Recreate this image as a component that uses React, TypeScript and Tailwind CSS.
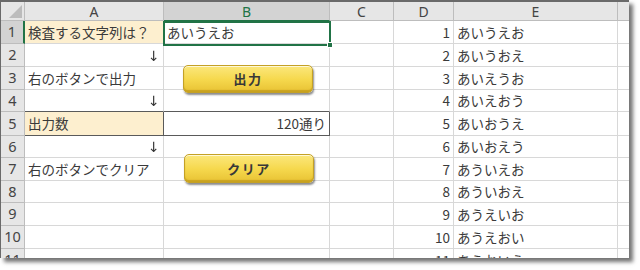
import React from "react";

const COLS = [
  { key: "A", w: 139 },
  { key: "B", w: 166 },
  { key: "C", w: 64 },
  { key: "D", w: 60 },
  { key: "E", w: 164 },
  { key: "F", w: 40 },
];

const HEIGHTS = [23, 23, 23, 22, 24, 22, 23, 22, 23, 23, 23];

const E_VALUES = [
  "あいうえお",
  "あいうおえ",
  "あいえうお",
  "あいえおう",
  "あいおうえ",
  "あいおえう",
  "あういえお",
  "あういおえ",
  "あうえいお",
  "あうえおい",
  "あうおいえ",
];

type Cell = { text?: string; align?: "left" | "right"; bg?: string; arrow?: boolean };

function rowCells(r: number): Record<string, Cell> {
  const cells: Record<string, Cell> = {
    D: { text: String(r), align: "right" },
    E: { text: E_VALUES[r - 1], align: "left" },
  };
  if (r === 1) {
    cells.A = { text: "検査する文字列は？", align: "left", bg: "bg-[#fdefcf]" };
    cells.B = { text: "あいうえお", align: "left" };
  }
  if (r === 2 || r === 4 || r === 6) cells.A = { text: "↓", align: "right", arrow: true };
  if (r === 3) cells.A = { text: "右のボタンで出力", align: "left" };
  if (r === 5) {
    cells.A = { text: "出力数", align: "left", bg: "bg-[#fdefcf]" };
    cells.B = { text: "120通り", align: "right" };
  }
  if (r === 7) cells.A = { text: "右のボタンでクリア", align: "left" };
  return cells;
}

const font = { fontFamily: '"Noto Sans CJK JP", "Noto Sans", sans-serif' };
const arrowFont = { fontFamily: '"DejaVu Sans", "Liberation Sans", sans-serif' };

function YellowButton({ label, className }: { label: string; className: string }) {
  return (
    <div
      className={
        "absolute flex items-center justify-center rounded-[5px] border border-[#c4a126] bg-gradient-to-b from-[#fbe77a] via-[#f6d94e] to-[#e8c232] shadow-[1px_2px_2px_rgba(0,0,0,0.45),inset_0_1px_0_rgba(255,255,255,0.7),inset_0_-2px_1px_rgba(170,130,10,0.5)] " +
        className
      }
    >
      <span className="text-[13px] font-bold tracking-[1.5px] text-[#383838]" style={font}>
        {label}
      </span>
    </div>
  );
}

export default function App() {
  return (
    <div className="w-[640px] h-[270px] bg-white overflow-hidden">
      <div className="relative w-[629px] h-[258px] border-t-2 border-l border-[#6a6a6a] bg-white overflow-hidden shadow-[4px_4px_4px_rgba(0,0,0,0.55)]">
        {/* header row */}
        <div className="flex h-[19px]">
          <div className="w-[24px] shrink-0 h-full bg-[#e6e6e6] border-r border-b border-[#bdbdbd] flex items-end justify-end pr-[2px] pb-[2px]">
            <div className="w-0 h-0 border-l-[13px] border-l-transparent border-b-[13px] border-b-[#bcbcbc]" />
          </div>
          {COLS.map((c) => (
            <div
              key={c.key}
              style={{ width: c.w, fontFamily: '"Noto Sans", sans-serif' }}
              className={
                "shrink-0 h-full flex items-center justify-center text-[14px] border-r border-b " +
                (c.key === "B"
                  ? "bg-[#d3d3d3] text-[#217346] border-r-[#bdbdbd] border-b-[#217346]"
                  : "bg-[#e6e6e6] text-[#444] border-[#bdbdbd]")
              }
            >
              {c.key}
            </div>
          ))}
        </div>
        {HEIGHTS.map((h, i) => {
          const r = i + 1;
          const cells = rowCells(r);
          return (
            <div key={r} className="flex" style={{ height: h }}>
              <div
                className={
                  "w-[24px] shrink-0 h-full flex items-center justify-center text-[14.5px] text-[#444] border-b border-[#bdbdbd] " +
                  (r === 1 ? "bg-[#d3d3d3] border-r-2 border-r-[#217346]" : "bg-[#e6e6e6] border-r")
                }
                style={{ fontFamily: '"Noto Sans", sans-serif' }}
              >
                {r}
              </div>
              {COLS.map((c) => {
                const cell = cells[c.key] || {};
                const boxed = r === 5 && (c.key === "A" || c.key === "B");
                const above = r === 4 && (c.key === "A" || c.key === "B");
                return (
                  <div
                    key={c.key}
                    style={{ width: c.w, ...(cell.arrow ? arrowFont : font) }}
                    className={
                      "shrink-0 h-full flex items-center text-[13.5px] text-[#3a3a3a] whitespace-nowrap overflow-hidden border-r border-b " +
                      (cell.align === "right" ? "justify-end pr-[3px] " : "pl-[3px] ") +
                      (cell.bg ? cell.bg + " " : "") +
                      (boxed
                        ? "border-[#5a5a5a] "
                        : above
                        ? "border-r-[#d8d8d8] border-b-[#5a5a5a] "
                        : "border-[#d8d8d8] ")
                    }
                  >
                    {cell.arrow ? (
                      <span className="inline-block will-change-transform text-[14px] text-[#333] pt-[2px]">{"\u2193"}</span>
                    ) : (
                      cell.text
                    )}
                  </div>
                );
              })}
            </div>
          );
        })}
        {/* selection of B1 (overlay) */}
        <div className="absolute left-[162px] top-[19px] w-[168px] h-[25px] border-2 border-[#217346] pointer-events-none" />
        <div className="absolute left-[326px] top-[40px] w-[6px] h-[6px] bg-[#217346] border border-white" />
        {/* floating shape buttons (overlay on the sheet) */}
        <YellowButton label="出力" className="left-[182px] top-[63px] w-[130px] h-[28px]" />
        <YellowButton label="クリア" className="left-[183px] top-[152px] w-[130px] h-[29px]" />
      </div>
    </div>
  );
}
